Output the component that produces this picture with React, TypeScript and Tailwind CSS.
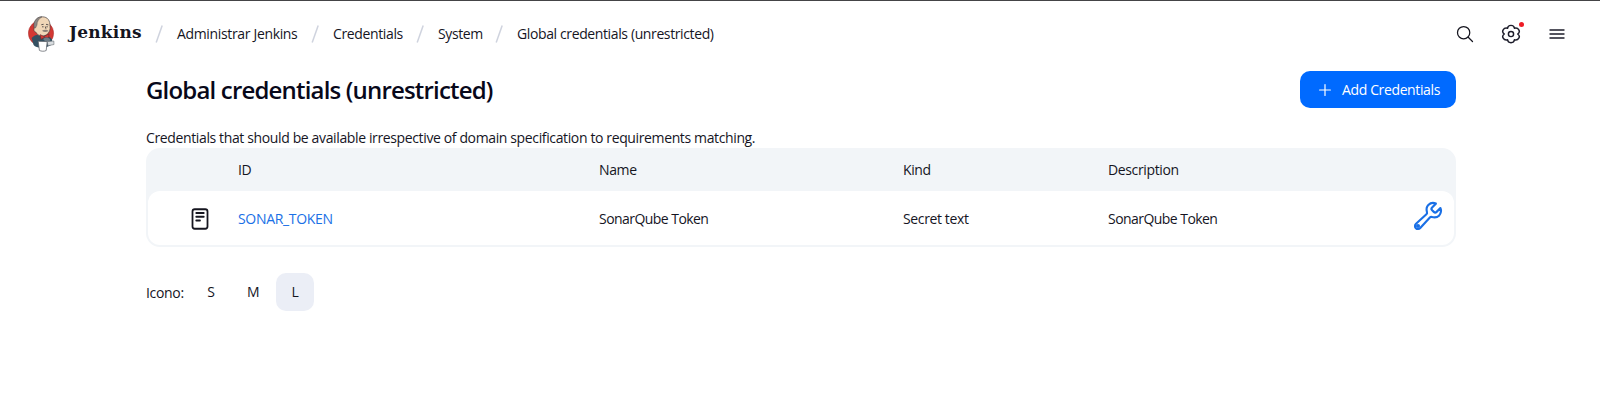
import { IoBuildOutline, IoReaderOutline, IoSearchOutline } from 'react-icons/io5';

function Slash() {
  return (
    <svg className="w-2 h-[18px] shrink-0" viewBox="0 0 8 18" fill="none" stroke="#cfd3de" strokeWidth="1.5">
      <path d="M7.2 .6 L1.2 17.4" />
    </svg>
  );
}

function Logo() {
  return (
    <svg className="w-[27px] h-9 shrink-0" viewBox="0 0 27 36">
      <circle cx="13" cy="17.2" r="12.6" fill="#d33833" stroke="#a52d2a" strokeWidth=".5" />
      <path d="M3.6 22 C6 19 10 18 12.5 19 C17 18.5 22 20 24 23.5 L24.5 28 C20 32 9 33.5 5.6 29 Z" fill="#335061" />
      <path d="M6.3 11.5 C5.5 4 9.5 0.8 14.3 0.8 C20 0.8 22.2 5 22 10.5 C22.5 13 21.5 17 18.5 18.8 C14 21.5 10 20 8.2 16.5 C6 16 5.3 13.5 6.3 11.5Z" fill="#f0d6b7" stroke="#4b4545" strokeWidth=".7" />
      <path d="M6.2 12 C5 6 8 1 14 .8 C11 2.6 8.8 5.5 9 9 L7.5 12Z" fill="#8b8784" stroke="#4b4545" strokeWidth=".4" />
      <path d="M13.3 8.7 L15.6 8.3 M18 8.3 L20.4 8.9 M14 10.8h1.6 M18.4 10.8h1.4 M17.3 10.5 L17.9 12.8" stroke="#4b4545" strokeWidth=".9" fill="none" />
      <path d="M14 14.8 C16 13.2 19.5 13.4 20.5 15 C18.5 16.2 16 16.4 14 14.8Z" fill="#8d8177" />
      <path d="M12 18.6 L16 20.4 L21 17.8 L20.7 22 L16.4 21.4 L13 23.4Z" fill="#d33833" stroke="#54262b" strokeWidth=".5" />
      <path d="M15.2 23 C18 20.6 21.4 21.5 22.4 24 C21.5 26 17 26.3 15.2 23Z" fill="#6d7b85" />
      <path d="M10.2 25.3 L19.2 25.6 L18.2 34.5 C16.5 35.6 13 35.4 11.4 34.4Z" fill="#fff" stroke="#53585e" strokeWidth=".7" />
      <path d="M19.3 25.6 L25.8 25 L26 28.5 L20 29.7Z" fill="#d9dde0" stroke="#6b7076" strokeWidth=".6" />
    </svg>
  );
}

function Gear() {
  return (
    <svg className="size-5" viewBox="0 0 20 20" fill="none" stroke="#1c1c2a" strokeWidth="1.45" strokeLinejoin="round">
      <path d="M16.7 10C20.1 12.2 17.4 17 13.4 15.8C13.1 19.6 6.9 19.6 6.6 15.8C2.6 17 -.1 12.2 3.3 10C-.1 7.8 2.6 3 6.6 4.2C6.9 .4 13.1 .4 13.4 4.2C17.4 3 20.1 7.8 16.7 10Z" />
      <circle cx="10" cy="10" r="2.6" />
    </svg>
  );
}

export default function App() {
  return (
    <div className="h-[409px] w-full overflow-hidden border-t border-[#444446] bg-white font-['Open_Sans','Noto_Sans',sans-serif] text-sm tracking-[-0.37px] text-[#15151f]">
      <header className="flex h-[66px] items-center pr-[35px] pl-7">
        <Logo />
        <span className="-mt-[3px] ml-[14px] w-[73px] font-['DejaVu_Serif',serif] text-[17px] font-bold tracking-[0.2px] whitespace-nowrap">Jenkins</span>
        <nav className="ml-[13px] flex items-center whitespace-nowrap">
          <Slash />
          <span className="ml-[14px] w-[120px] tracking-[-0.34px]">Administrar Jenkins</span>
          <span className="ml-[14px] flex"><Slash /></span>
          <span className="ml-[14px] w-[69px]">Credentials</span>
          <span className="ml-[14px] flex"><Slash /></span>
          <span className="ml-[14px] w-[43px]">System</span>
          <span className="ml-[14px] flex"><Slash /></span>
          <span className="ml-[14px] tracking-[-0.38px]">Global credentials (unrestricted)</span>
        </nav>
        <div className="ml-auto flex items-center">
          <IoSearchOutline className="size-5" />
          <span className="relative mr-7 ml-[26px]">
            <Gear />
            <span className="absolute -top-[2.5px] -right-[3px] size-[5px] rounded-full bg-[#ee1c25]" />
          </span>
          <svg className="h-3 w-4" viewBox="0 0 16 12" stroke="#1c1c2a" strokeWidth="1.4" strokeLinecap="round">
            <path d="M1 2H15M1 6H15M1 10H15" />
          </svg>
        </div>
      </header>
      <main className="ml-[146px] w-[1310px] pt-1">
        <div className="flex h-[37px] items-center justify-between">
          <h1 className="text-2xl font-semibold tracking-[-0.82px] text-[#08081a]">Global credentials (unrestricted)</h1>
          <button className="flex h-[37px] w-[156px] items-center rounded-[10px] bg-[#006aff] pl-[19px] text-white">
            <svg className="mr-[11px] size-3" viewBox="0 0 12 12" stroke="currentColor" strokeWidth="1.2" strokeLinecap="round">
              <path d="M6 .6V11.4M.6 6H11.4" />
            </svg>
            Add Credentials
          </button>
        </div>
        <p className="mt-5 h-5 leading-5">Credentials that should be available irrespective of domain specification to requirements matching.</p>
        <div className="h-[99px] rounded-[14px] bg-[#f2f5f8] px-[2px] pb-[2px]">
          <div className="grid h-[43px] grid-cols-[90px_361px_304px_205px_1fr] items-center">
            <span />
            <span>ID</span>
            <span>Name</span>
            <span>Kind</span>
            <span>Description</span>
          </div>
          <div className="grid h-[54px] grid-cols-[90px_361px_304px_205px_1fr_42px] items-center rounded-xl bg-white pt-[2px]">
            <IoReaderOutline className="ml-10 size-6 [&_*]:stroke-[38px]" />
            <a className="tracking-[-0.32px] text-[#1a70e6]">SONAR_TOKEN</a>
            <span className="tracking-[-0.55px]">SonarQube Token</span>
            <span>Secret text</span>
            <span className="tracking-[-0.55px]">SonarQube Token</span>
            <IoBuildOutline className="-mt-[6px] size-8 text-[#1a70e6] [&_*]:stroke-[34px]" />
          </div>
        </div>
        <div className="mt-[26px] flex h-[38px] items-center">
          <span className="w-[46px] pt-px tracking-[-0.32px]">Icono:</span>
          <button className="size-[38px]">S</button>
          <button className="ml-1 size-[38px]">M</button>
          <button className="ml-1 size-[38px] rounded-[10px] bg-[#ebeef6]">L</button>
        </div>
      </main>
    </div>
  );
}
